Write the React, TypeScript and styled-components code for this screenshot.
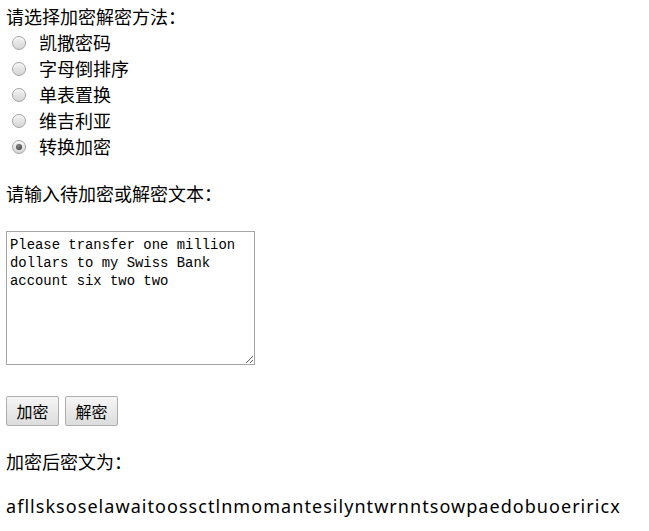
import React, { useState } from "react";
import styled, { createGlobalStyle } from "styled-components";

const GlobalStyle = createGlobalStyle`
  html, body {
    margin: 0;
    padding: 0;
    background: #ffffff;
  }
  body {
    font-family: "Noto Sans CJK SC", "Noto Sans", sans-serif;
    color: #000000;
  }
`;

const Page = styled.div`
  display: flex;
  flex-direction: column;
  align-items: flex-start;
  padding: 3px 6px 0 6px;
  font-size: 18px;
  line-height: 26px;
`;

const Line = styled.div<{ $top?: number }>`
  height: 26px;
  margin-top: ${(p) => p.$top ?? 0}px;
  white-space: nowrap;
`;

const OptionList = styled.div`
  display: flex;
  flex-direction: column;
`;

const OptionRow = styled.label`
  display: flex;
  align-items: center;
  height: 26px;
  cursor: default;
`;

const Radio = styled.input.attrs({ type: "radio" })`
  appearance: none;
  -webkit-appearance: none;
  box-sizing: border-box;
  width: 14px;
  height: 14px;
  margin: 1px 13px 0 6px;
  border-radius: 50%;
  border: 1px solid #a3a3a3;
  background: linear-gradient(180deg, #f4f4f4 0%, #e2e2e2 55%, #d6d6d6 100%);
  box-shadow: inset 0 1px 1px rgba(255, 255, 255, 0.8);
  position: relative;
  &:checked::after {
    content: "";
    position: absolute;
    left: 3px;
    top: 3px;
    width: 6px;
    height: 6px;
    border-radius: 50%;
    background: radial-gradient(circle at 40% 35%, #8a8a8a 0%, #4a4a4a 70%, #3a3a3a 100%);
  }
`;

const TextBox = styled.textarea`
  box-sizing: border-box;
  width: 249px;
  height: 134px;
  margin-top: 25px;
  padding: 4px 3px 2px 3px;
  border: 1px solid #a6a6a6;
  font-family: "Liberation Mono", "DejaVu Sans Mono", monospace;
  font-size: 13.9px;
  line-height: 18px;
  color: #000000;
  background: #ffffff;
  outline: none;
  resize: both;
`;

const ButtonRow = styled.div`
  display: flex;
  gap: 6px;
  margin-top: 31px;
`;

const Button = styled.button`
  box-sizing: border-box;
  width: 53px;
  height: 30px;
  padding: 0;
  border: 1px solid #adadad;
  border-radius: 2px;
  background: linear-gradient(180deg, #f6f6f6 0%, #e9e9e9 50%, #dcdcdc 100%);
  font-family: "Noto Sans CJK SC", sans-serif;
  font-size: 16px;
  line-height: 28px;
  color: #000000;
`;

const Cipher = styled.div`
  height: 26px;
  margin-top: 19px;
  white-space: nowrap;
  font-family: "Noto Sans", "Noto Sans CJK SC", sans-serif;
  letter-spacing: 1.05px;
`;

const options = ["凯撒密码", "字母倒排序", "单表置换", "维吉利亚", "转换加密"];

export default function App() {
  const [choice, setChoice] = useState(4);
  const [text, setText] = useState(
    "Please transfer one million dollars to my Swiss Bank account six two two"
  );
  return (
    <>
      <GlobalStyle />
      <Page>
        <Line>请选择加密解密方法：</Line>
        <OptionList>
          {options.map((o, i) => (
            <OptionRow key={o}>
              <Radio
                name="method"
                checked={choice === i}
                onChange={() => setChoice(i)}
              />
              {o}
            </OptionRow>
          ))}
        </OptionList>
        <Line $top={21}>请输入待加密或解密文本：</Line>
        <TextBox value={text} onChange={(e) => setText(e.target.value)} />
        <ButtonRow>
          <Button>加密</Button>
          <Button>解密</Button>
        </ButtonRow>
        <Line $top={22}>加密后密文为：</Line>
        <Cipher>afllsksoselawaitoossctlnmomantesilyntwrnntsowpaedobuoeriricx</Cipher>
      </Page>
    </>
  );
}
